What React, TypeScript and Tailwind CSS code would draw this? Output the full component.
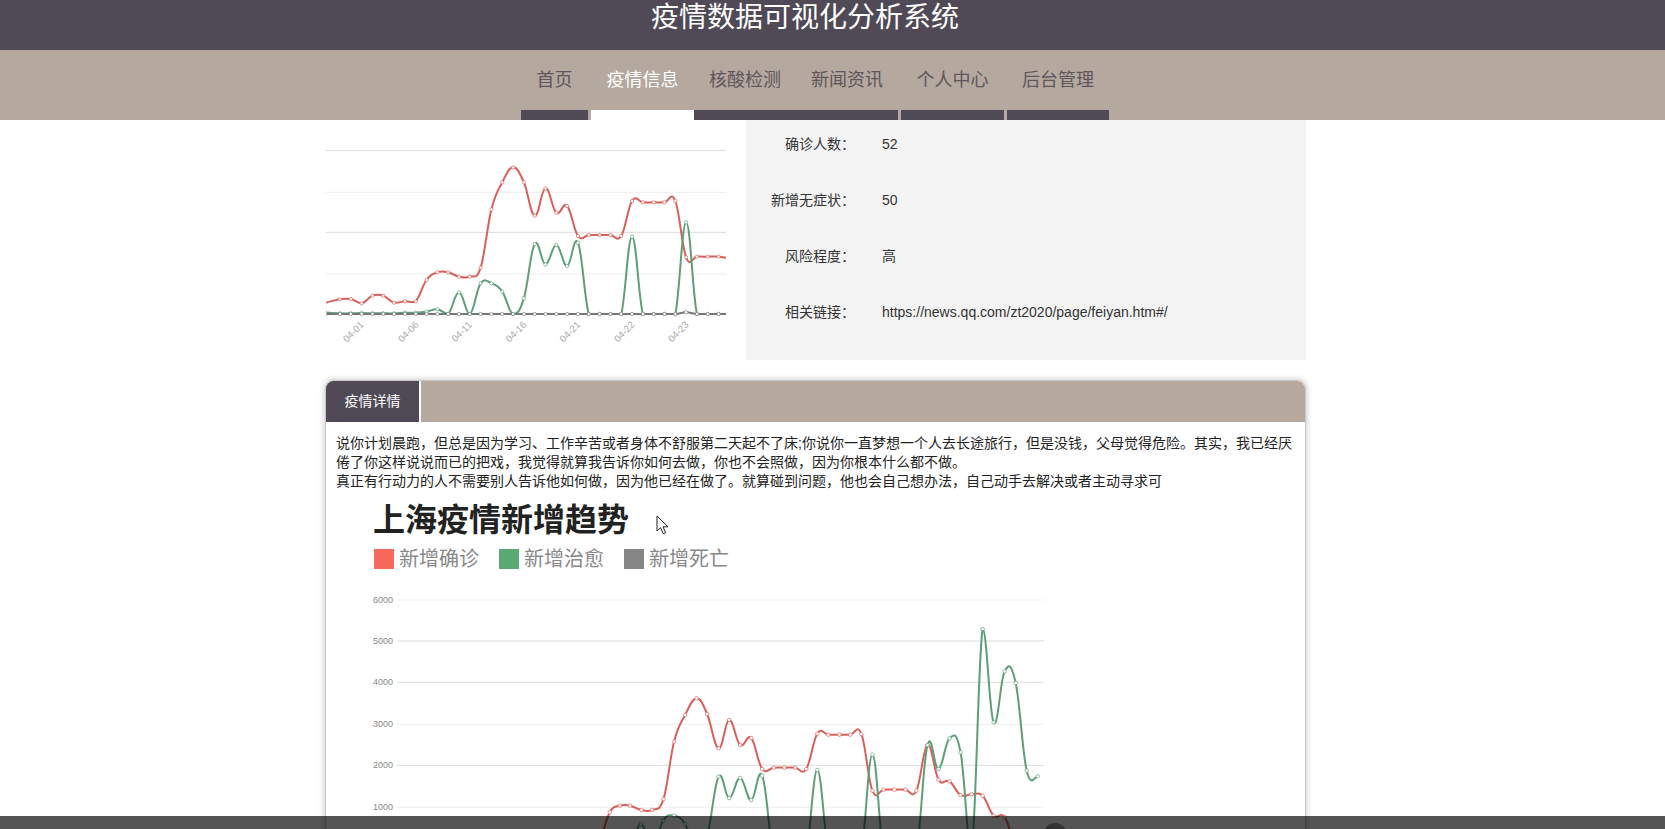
const navItems = [
  { label: '首页', w: 'w-[67px]', mr: 'mr-[3px]' },
  { label: '疫情信息', w: 'w-[103px]', mr: '', active: true },
  { label: '核酸检测', w: 'w-[102px]', mr: '' },
  { label: '新闻资讯', w: 'w-[102px]', mr: 'mr-[3px]' },
  { label: '个人中心', w: 'w-[103px]', mr: 'mr-[3px]' },
  { label: '后台管理', w: 'w-[102px]', mr: '' },
];

const infoRows = [
  { label: '确诊人数：', value: '52' },
  { label: '新增无症状：', value: '50' },
  { label: '风险程度：', value: '高' },
  { label: '相关链接：', value: 'https://news.qq.com/zt2020/page/feiyan.htm#/' },
];

type Pt = [number, number];

// smooth line, control points stay inside the series' y range so it doesn't dip below the axis
function smoothPath(pts: Pt[]) {
  const ys = pts.map(p => p[1]);
  const minY = Math.min(...ys);
  const maxY = Math.max(...ys);
  const clamp = (v: number) => Math.min(maxY, Math.max(minY, v));
  let d = `M${pts[0][0]} ${pts[0][1]}`;
  for (let i = 0; i < pts.length - 1; i++) {
    const p0 = pts[Math.max(i - 1, 0)];
    const p1 = pts[i];
    const p2 = pts[i + 1];
    const p3 = pts[Math.min(i + 2, pts.length - 1)];
    const k = 0.2;
    d += `C${p1[0] + (p2[0] - p0[0]) * k} ${clamp(p1[1] + (p2[1] - p0[1]) * k)} ${p2[0] - (p3[0] - p1[0]) * k} ${clamp(p2[1] - (p3[1] - p1[1]) * k)} ${p2[0]} ${p2[1]}`;
  }
  return d;
}

function Series({ pts, color, width, r }: { pts: Pt[]; color: string; width: number; r: number }) {
  return (
    <g>
      <path d={smoothPath(pts)} fill="none" stroke={color} strokeWidth={width} />
      {pts.map((p, i) => (
        <circle key={i} cx={p[0]} cy={p[1]} r={r} fill="#fff" stroke={color} strokeWidth={width / 3} />
      ))}
    </g>
  );
}

// top chart, values are in 3x units
const topRedY = [548, 538, 537, 550, 527, 527, 548, 544, 544, 480, 457, 457, 470, 470, 443, 268, 187, 142, 187, 287, 205, 278, 258, 348, 345, 345, 345, 348, 243, 247, 247, 247, 243, 412, 410, 410, 410, 415];
const topGreenY = [578, 580, 580, 579, 580, 580, 580, 578, 578, 575, 568, 582, 517, 582, 490, 490, 515, 582, 535, 372, 433, 375, 438, 368, 582, 582, 582, 582, 350, 582, 582, 582, 582, 307, 582, 582, 582, 582];
const topGrayY = topRedY.map((_, i) => (i === 33 ? 577 : 582));
const topX = (i: number) => (i === 0 ? 46 : 90 + (i - 1) * 32.45);
const topPts = (ys: number[]): Pt[] => ys.map((y, i) => [topX(i), y]);
const topGrid = [
  { y: 92, c: '#dcdcdc' },
  { y: 217, c: '#eeeeee' },
  { y: 337, c: '#dcdcdc' },
  { y: 462, c: '#eeeeee' },
];
const topLabels = [
  { t: '04-01', x: 130 },
  { t: '04-06', x: 295 },
  { t: '04-11', x: 455 },
  { t: '04-16', x: 618 },
  { t: '04-21', x: 780 },
  { t: '04-22', x: 943 },
  { t: '04-23', x: 1105 },
];

// big chart, x scaled 2.178 and y scaled 3 from the measured crop
const bigRed: Pt[] = [
  [520, 815], [544, 790], [568, 700], [590, 680], [612, 680], [637, 693], [660, 693], [685, 660], [708, 488], [732, 408], [757, 358], [780, 405], [805, 508], [828, 423], [852, 498], [876, 477], [900, 570], [925, 566], [948, 566], [972, 566], [996, 570], [1020, 464], [1044, 467], [1068, 467], [1092, 467], [1116, 465], [1140, 635], [1164, 632], [1188, 632], [1212, 632], [1236, 635], [1260, 498], [1284, 602], [1308, 607], [1332, 648], [1356, 646], [1380, 650], [1404, 710], [1428, 714], [1452, 800], [1476, 815],
];
const bigGreen: Pt[] = [
  [612, 815], [636, 735], [660, 815], [684, 725], [708, 710], [732, 735], [756, 815], [780, 770], [805, 593], [828, 657], [852, 597], [876, 663], [900, 590], [924, 815], [948, 815], [972, 815], [996, 815], [1020, 573], [1044, 815], [1068, 815], [1092, 815], [1116, 815], [1140, 527], [1164, 815], [1188, 815], [1212, 815], [1236, 815], [1260, 498], [1284, 570], [1308, 478], [1332, 520], [1356, 815], [1380, 150], [1404, 430], [1428, 277], [1452, 312], [1476, 575], [1500, 592],
];
const bigGrid = [
  { t: '6000', y: 63, c: '#f3f3f3' },
  { t: '5000', y: 186, c: '#dcdcdc' },
  { t: '4000', y: 310, c: '#dcdcdc' },
  { t: '3000', y: 436, c: '#eeeeee' },
  { t: '2000', y: 559, c: '#dcdcdc' },
  { t: '1000', y: 685, c: '#eeeeee' },
];
const scaleBig = (pts: Pt[]): Pt[] => pts.map(([x, y]) => [x / 2.178, y / 3]);

const legend = [
  { label: '新增确诊', color: 'bg-[#f8675c]' },
  { label: '新增治愈', color: 'bg-[#5aa873]' },
  { label: '新增死亡', color: 'bg-[#858585]' },
];

export default function App() {
  return (
    <div className="relative h-[829px] overflow-hidden bg-white [font-family:'Liberation_Sans','Noto_Sans_CJK_SC',sans-serif]">
      <div className="h-[50px] bg-[#4f4a55] pl-[651px] text-[28px] leading-[36px] text-white">疫情数据可视化分析系统</div>

      <nav className="flex h-[70px] bg-[#b5a89f] pl-[521px]">
        {navItems.map(item => (
          <div key={item.label} className={`flex flex-col ${item.w} ${item.mr}`}>
            <span className={`h-[60px] text-center text-[18px] leading-[60px] ${item.active ? 'text-white' : 'text-[#5e565a]'}`}>
              {item.label}
            </span>
            <span className={`h-[10px] ${item.active ? 'bg-white' : 'bg-[#4f4a55]'}`} />
          </div>
        ))}
      </nav>

      <div className="ml-[326px] w-[980px]">
        <div className="flex h-[240px] gap-[20px]">
          <svg width="400" height="240" viewBox="48 0 1200 720" className="shrink-0">
            {topGrid.map(g => (
              <line key={g.y} x1="48" x2="1248" y1={g.y} y2={g.y} stroke={g.c} strokeWidth="3" />
            ))}
            <Series pts={topPts(topRedY)} color="#d9605a" width={6} r={5} />
            <Series pts={topPts(topGreenY)} color="#5e9e78" width={6} r={5} />
            <Series pts={topPts(topGrayY)} color="#777777" width={6} r={5} />
            {topLabels.map(l => (
              <text key={l.t} x={l.x} y={645} fontSize="29" fill="#aaaaaa" textAnchor="middle" transform={`rotate(-45 ${l.x} 635)`}>
                {l.t}
              </text>
            ))}
          </svg>
          <div className="flex-1 bg-[#f3f3f3] pt-[10px]">
            {infoRows.map(row => (
              <div key={row.label} className="flex h-[56px] text-[14px] leading-[28px] text-[#333]">
                <span className="w-[109px] text-right">{row.label}</span>
                <span className="ml-[27px]">{row.value}</span>
              </div>
            ))}
          </div>
        </div>

        <div className="mt-[20px] -ml-[1px] rounded-lg border border-[#c8c8c8] shadow-[0_0_6px_rgba(0,0,0,0.25)]">
          <div className="flex h-[41px] overflow-hidden rounded-t-lg bg-[#b5a89f]">
            <div className="w-[95px] border-r-2 border-white bg-[#4f4a55] text-center text-[14px] leading-[41px] text-white">疫情详情</div>
          </div>
          <div className="h-[600px] px-[10px] pt-[12px] text-[14px] leading-[19px] text-[#222]">
            <p>
              说你计划晨跑，但总是因为学习、工作辛苦或者身体不舒服第二天起不了床;你说你一直梦想一个人去长途旅行，但是没钱，父母觉得危险。其实，我已经厌倦了你这样说说而已的把戏，我觉得就算我告诉你如何去做，你也不会照做，因为你根本什么都不做。
            </p>
            <p>真正有行动力的人不需要别人告诉他如何做，因为他已经在做了。就算碰到问题，他也会自己想办法，自己动手去解决或者主动寻求可</p>
            <h2 className="ml-[37px] mt-[7px] text-[32px] font-bold leading-[44px] text-[#222]">上海疫情新增趋势</h2>
            <div className="ml-[38px] mt-[5px] flex gap-[20px]">
              {legend.map(l => (
                <div key={l.label} className="flex items-center gap-[5px]">
                  <span className={`h-[20px] w-[20px] ${l.color}`} />
                  <span className="text-[20px] leading-[24px] text-[#888]">{l.label}</span>
                </div>
              ))}
            </div>
            <svg width="716" height="270" className="ml-[13px] mt-[8px] block overflow-visible">
              {bigGrid.map(g => (
                <g key={g.t}>
                  <line x1="48" x2="695" y1={g.y / 3} y2={g.y / 3} stroke={g.c} strokeWidth="1" />
                  <text x="24" y={g.y / 3 + 3} fontSize="9" fill="#888888">{g.t}</text>
                </g>
              ))}
              <Series pts={scaleBig(bigRed)} color="#d9605a" width={2} r={1.8} />
              <Series pts={scaleBig(bigGreen)} color="#5e9e78" width={2} r={1.8} />
            </svg>
          </div>
        </div>
      </div>

      <svg width="14" height="20" viewBox="0 0 14 20" className="absolute left-[656px] top-[515px]">
        <path d="M1 1v15l3.6-3.3 2.6 6 2.4-1-2.6-5.9h5z" fill="#fff" stroke="#222" strokeWidth="1" />
      </svg>

      <div className="absolute inset-x-0 bottom-0 h-[13px] bg-black/[0.67]" />
      <div className="absolute left-[1043px] top-[823px] h-[24px] w-[24px] rounded-full bg-[#333]" />
    </div>
  );
}
